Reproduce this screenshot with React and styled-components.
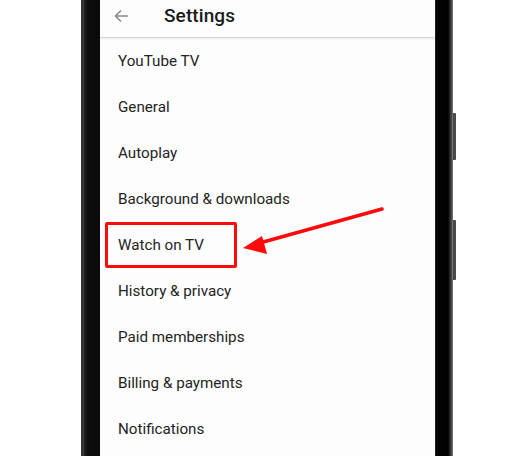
import React from 'react'
import styled, { createGlobalStyle } from 'styled-components'

const items = [
  'YouTube TV',
  'General',
  'Autoplay',
  'Background & downloads',
  'Watch on TV',
  'History & privacy',
  'Paid memberships',
  'Billing & payments',
  'Notifications',
]

const App = () => {
  return (
    <>
      <GlobalStyle />
      <Page>
        <Phone>
          <LeftBezel />
          <Screen>
            <Header>
              <BackArrow viewBox="0 0 16 16">
                <path d="M15 8H2.5M8 2.5L2.5 8L8 13.5" fill="none" stroke="#8a8a8a" strokeWidth="1.6" />
              </BackArrow>
              <Title>Settings</Title>
            </Header>
            <List>
              {items.map((item) => (
                <Row key={item} $highlighted={item === 'Watch on TV'}>
                  {item}
                </Row>
              ))}
            </List>
          </Screen>
          <RightBezel>
            <SideButton $top={113} $height={47} />
            <SideButton $top={220} $height={60} />
          </RightBezel>
          <Arrow viewBox="0 0 513 456">
            <line x1="382" y1="209" x2="256" y2="244" stroke="#ff0a0a" strokeWidth="3.5" strokeLinecap="round" />
            <polygon points="243,248 262,236 267,254" fill="#ff0a0a" />
          </Arrow>
        </Phone>
      </Page>
    </>
  )
}

const GlobalStyle = createGlobalStyle`
  html, body {
    margin: 0;
    padding: 0;
    background: #ffffff;
    overflow: hidden;
  }
  * {
    box-sizing: border-box;
  }
`

const Page = styled.div`
  width: 513px;
  height: 456px;
  overflow: hidden;
  background: #ffffff;
  font-family: Roboto, "Liberation Sans", sans-serif;
`

const Phone = styled.div`
  display: flex;
  height: 456px;
  margin-left: 81px;
  width: 375px;
`

const LeftBezel = styled.div`
  width: 19px;
  background: linear-gradient(90deg, #2b2b2b 0, #3a3a3a 2px, #1c1c1c 4px, #0d0d0d 7px, #0a0a0a 100%);
`

const RightBezel = styled.div`
  position: relative;
  width: 18px;
  background: linear-gradient(90deg, #3a3a3a 0, #050505 1px, #000 13px, #2a2a2a 15px, #555 17px, #8a8a8a 18px);
`

const SideButton = styled.div`
  position: absolute;
  right: -3px;
  top: ${(p) => p.$top}px;
  height: ${(p) => p.$height}px;
  width: 3px;
  background: #4a4a4a;
  border-radius: 0 1px 1px 0;
`

const Screen = styled.div`
  width: 335px;
  display: flex;
  flex-direction: column;
  background: #fcfdfc;
`

const Header = styled.div`
  height: 38px;
  display: flex;
  align-items: center;
  padding: 0 0 6px 13px;
  gap: 35px;
  border-bottom: 1px solid #d6d6d6;
  box-shadow: 0 1px 2px rgba(0, 0, 0, 0.08);
  position: relative;
  z-index: 1;
`

const BackArrow = styled.svg`
  width: 16px;
  height: 16px;
`

const Title = styled.div`
  font-size: 19px;
  font-weight: 500;
  color: #1a1a1a;
  letter-spacing: 0.1px;
`

const List = styled.div`
  display: flex;
  flex-direction: column;
`

const Row = styled.div`
  height: 46px;
  display: flex;
  align-items: center;
  font-size: 15.2px;
  color: #242424;
  padding-left: 18px;

  ${(p) =>
    p.$highlighted &&
    `
    margin-left: 5px;
    width: 132px;
    padding-left: 10px;
    padding-bottom: 1px;
    border: 3px solid #ff0a0a;
    border-radius: 2px;
  `}
`

const Arrow = styled.svg`
  position: absolute;
  left: 0;
  top: 0;
  width: 513px;
  height: 456px;
  pointer-events: none;
`

export default App
